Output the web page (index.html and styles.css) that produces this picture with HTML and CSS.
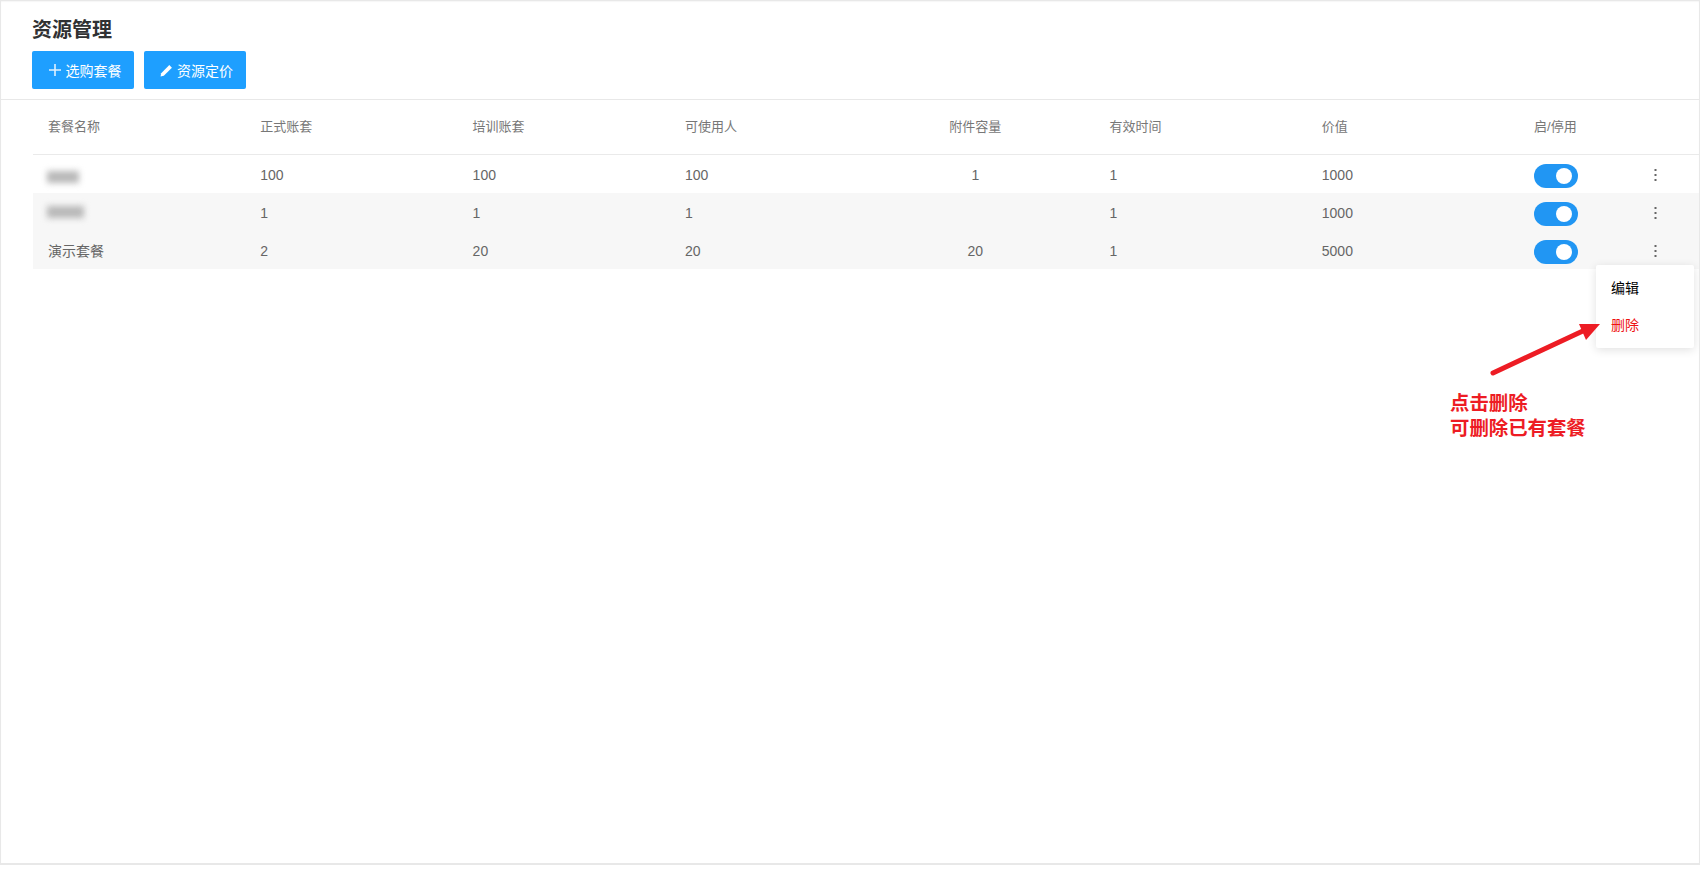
FILE: index.html
```html
<!DOCTYPE html>
<html lang="zh-CN">
<head>
  <meta charset="UTF-8">
  <title>资源管理</title>
  <link rel="stylesheet" href="styles.css">
</head>
<body>
  <div class="page">
    <header class="top">
      <h2>资源管理</h2>
      <div class="acoes">
        <button class="btn">
          <svg width="14" height="14" viewBox="0 0 14 14"><path d="M7 1v12M1 7h12" stroke="#dff1ff" stroke-width="1.6" fill="none"/></svg>
          选购套餐
        </button>
        <button class="btn">
          <svg width="13" height="13" viewBox="0 0 12 12"><path d="M0.5 11.5l0.6-3L8.6 1l2.4 2.4-7.5 7.5z" fill="#fff"/></svg>
          资源定价
        </button>
      </div>
    </header>

    <div class="tabela">
      <div class="linha cabecalho">
        <div>套餐名称</div>
        <div>正式账套</div>
        <div>培训账套</div>
        <div>可使用人</div>
        <div class="centro">附件容量</div>
        <div>有效时间</div>
        <div>价值</div>
        <div>启/停用</div>
        <div></div>
      </div>

      <div class="linha">
        <div><span class="borrado curto"></span></div>
        <div>100</div>
        <div>100</div>
        <div>100</div>
        <div class="centro">1</div>
        <div>1</div>
        <div>1000</div>
        <div><span class="chave"></span></div>
        <div class="mais"><svg width="3" height="13" viewBox="0 0 3 13"><path d="M0.5 0h2v2h-2zM0.5 5h2v2h-2zM0.5 10h2v2h-2z" fill="#666"/></svg></div>
      </div>
      <div class="linha cinza">
        <div><span class="borrado longo"></span></div>
        <div>1</div>
        <div>1</div>
        <div>1</div>
        <div class="centro"></div>
        <div>1</div>
        <div>1000</div>
        <div><span class="chave"></span></div>
        <div class="mais"><svg width="3" height="13" viewBox="0 0 3 13"><path d="M0.5 0h2v2h-2zM0.5 5h2v2h-2zM0.5 10h2v2h-2z" fill="#666"/></svg></div>
      </div>
      <div class="linha cinza">
        <div class="nome">演示套餐</div>
        <div>2</div>
        <div>20</div>
        <div>20</div>
        <div class="centro">20</div>
        <div>1</div>
        <div>5000</div>
        <div><span class="chave"></span></div>
        <div class="mais"><svg width="3" height="13" viewBox="0 0 3 13"><path d="M0.5 0h2v2h-2zM0.5 5h2v2h-2zM0.5 10h2v2h-2z" fill="#666"/></svg></div>
      </div>
    </div>

    <div class="menu">
      <a>编辑</a>
      <a class="excluir">删除</a>
    </div>

    <svg class="seta" width="130" height="70" viewBox="0 0 130 70">
      <path d="M5 63L97 20" stroke="#ed1c24" stroke-width="5" stroke-linecap="round" fill="none"/>
      <path d="M112 14L91 14L98 30z" fill="#ed1c24"/>
    </svg>
    <div class="nota">点击删除<br>可删除已有套餐</div>
  </div>
</body>
</html>
```

FILE: styles.css
```css
html, body { margin: 0; background: #fff; }
body { font-family: "Liberation Sans", "Noto Sans CJK SC", sans-serif; color: #666; font-size: 14px; }
.page { position: relative; height: 865px; box-sizing: border-box; border: 1px solid #e8e8e8; border-top: 0; border-bottom-width: 2px; box-shadow: inset 0 2px 2px -1px #e0e0e0; overflow: hidden; }

.top { height: 100px; box-sizing: border-box; padding: 18px 31px 0; border-bottom: 1px solid #e8e8e8; }
.top h2 { margin: 0 0 8px; font-size: 20px; line-height: 25px; font-weight: bold; color: #303133; }
.acoes { display: flex; gap: 10px; }
.btn { display: flex; align-items: center; justify-content: center; gap: 4px; width: 102px; height: 38px; padding: 0 0 0 3px; border: 0; border-radius: 2px; background: #1e9fff; color: #fff; font-family: inherit; font-size: 14px; }

.tabela { margin-left: 32px; }
.linha { display: grid; grid-template-columns: repeat(7, 212.3px) 136px 1fr; align-items: center; height: 38px; }
.linha > div { padding-left: 15px; padding-top: 2px; }
.linha > .centro { padding-left: 0; padding-right: 26px; text-align: center; }
.linha > .nome { padding-top: 0; }
.cabecalho { height: 54px; border-bottom: 1px solid #eaeaea; color: #777; font-size: 13px; }
.cabecalho > div { padding-bottom: 3px; }
.linha.cabecalho > div { padding-top: 0; }
.cinza { background: #f7f7f7; }

.borrado { display: block; height: 12px; background: #b8b8b8; filter: blur(3px); margin-left: -1px; }
.curto { width: 32px; margin-top: 3px; }
.longo { width: 37px; margin-bottom: 3px; }

.chave { display: block; position: relative; width: 44px; height: 24px; margin-top: 2px; border-radius: 12px; background: #2196f3; }
.chave::after { content: ""; position: absolute; top: 4px; right: 6px; width: 16px; height: 16px; border-radius: 50%; background: #fff; }
.linha > .mais { padding-left: 0; display: flex; margin-left: -1px; }

.menu { position: absolute; left: 1595px; top: 265px; width: 98px; height: 83px; box-sizing: border-box; padding-top: 5px; background: #fff; border-radius: 2px; box-shadow: 0 2px 10px rgba(0,0,0,0.12); }
.menu a { display: block; height: 37px; line-height: 36px; padding-left: 15px; color: #000; font-size: 14px; }
.menu .excluir { color: #ee1111; }

.seta { position: absolute; left: 1487px; top: 310px; }
.nota { position: absolute; left: 1449px; top: 391px; color: #ed1c24; font-size: 19.4px; font-weight: bold; line-height: 25px; }
```
